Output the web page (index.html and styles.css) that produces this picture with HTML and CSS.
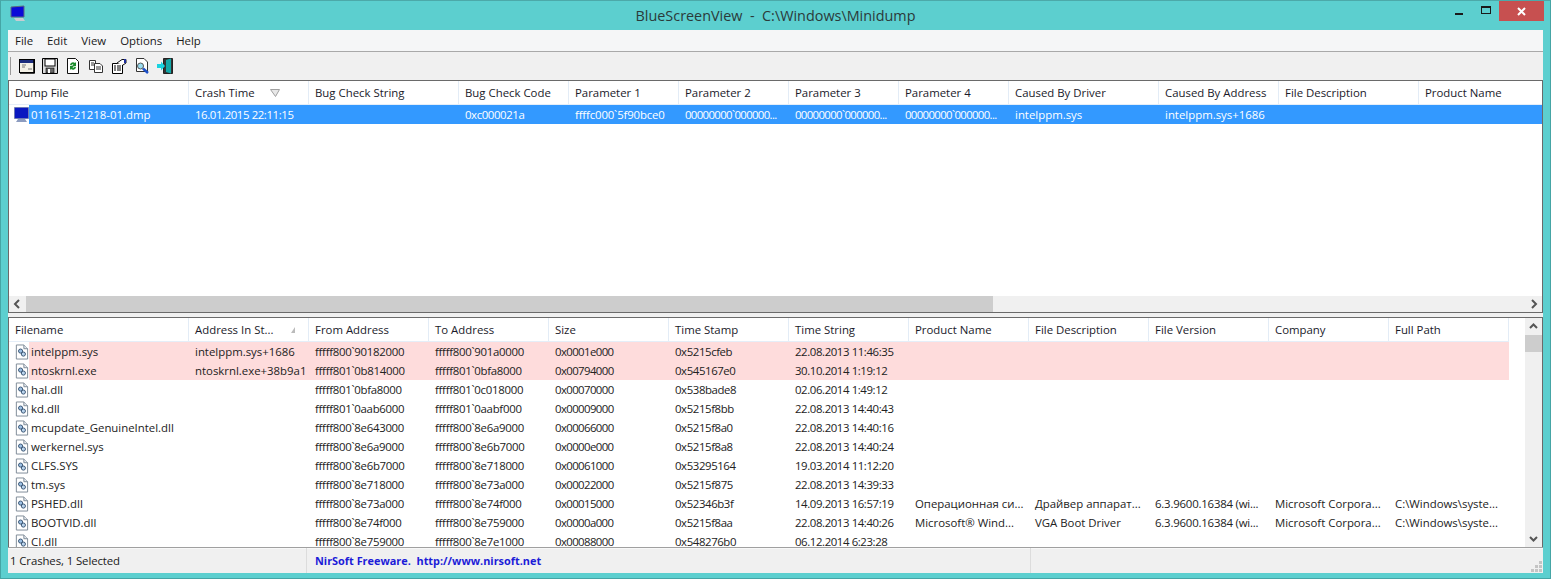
FILE: index.html
```html
<!DOCTYPE html>
<html lang="en">
<head>
<meta charset="utf-8">
<title>BlueScreenView</title>
<link rel="stylesheet" href="styles.css">
</head>
<body>
<svg class="defs" width="0" height="0">
  <symbol id="dll" viewBox="0 0 16 16">
    <path d="M2.5 .5H10.5L14.5 4.5V15.500H2.500Z" fill="#fff" stroke="#7b8794"/>
    <path d="M10.5 .5V4.5H14.5" fill="#e4e8ee" stroke="#7b8794"/>
    <circle cx="7" cy="7" r="2.2" fill="#9cc0e4" stroke="#34506f"/>
    <circle cx="10" cy="10.2" r="2.2" fill="#b9d3ec" stroke="#34506f"/>
  </symbol>
</svg>
<div class="window">
  <header class="titlebar">
    <svg class="appicon" width="16" height="18" viewBox="0 0 16 18"><path d="M1 2 14 1V12L1 12Z" fill="#0a0ad8" stroke="#5b6a80"/><path d="M4 13H13L15 16H6Z" fill="#c8cdd2"/></svg>
    <div class="title">BlueScreenView&nbsp; -&nbsp; C:\Windows\Minidump</div>
    <div class="controls">
      <div class="ctl"><span class="min"></span></div>
      <div class="ctl"><span class="max"></span></div>
      <div class="ctl close"><svg width="9" height="9" viewBox="0 0 9 9"><path d="M1 1 8 8M8 1 1 8" stroke="#fff" stroke-width="2"/></svg></div>
    </div>
  </header>
  <div class="client">
    <nav class="menu"><span>File</span><span>Edit</span><span>View</span><span>Options</span><span>Help</span></nav>
    <div class="toolbar">
      <i class="grip"></i>
      <svg class="tool" width="16" height="16" viewBox="0 0 16 16"><rect x=".5" y="1.500" width="15" height="13" fill="#f4f1e6" stroke="#000"/><rect x="1" y="2" width="14" height="3" fill="#1c2c7c"/><path d="M3 7H7M3 9H6M9 11H13" stroke="#777"/><path d="M15 2V15H1" fill="none" stroke="#000" stroke-width="1.500"/></svg>
      <svg class="tool" width="16" height="16" viewBox="0 0 16 16"><path d="M.5 .5H15.500V15.500H.5Z" fill="#dcdcdc" stroke="#000"/><rect x="3" y="1" width="10" height="7" fill="#fff" stroke="#000"/><rect x="4" y="10" width="8" height="5" fill="#666" stroke="#000" stroke-width=".6"/><rect x="6" y="11" width="2" height="4" fill="#fff"/></svg>
      <svg class="tool" width="16" height="16" viewBox="0 0 16 16"><path d="M2.500 .5H10.500L13.500 3.500V15.500H2.500Z" fill="#fff" stroke="#111"/><path d="M5 7A3 3 0 0 1 10 5L11 4V8H7L8.500 6.500A1.500 1.500 0 0 0 6.500 7.500Z" fill="#1c8c2c"/><path d="M11 9A3 3 0 0 1 6 11L5 12V8H9L7.500 9.500A1.500 1.500 0 0 0 9.500 8.500Z" fill="#1c8c2c"/></svg>
      <svg class="tool" width="16" height="16" viewBox="0 0 16 16"><path d="M1.500 2.500H7.500V11.500H1.500Z" fill="#fff" stroke="#333"/><path d="M6.500 5.500H12L14.500 8V14.500H6.500Z" fill="#fff" stroke="#333"/><path d="M3 5H6M3 7H6M8 9H13M8 11H13" stroke="#333"/></svg>
      <svg class="tool" width="16" height="16" viewBox="0 0 16 16"><path d="M1.500 5.500H11.500V15.500H1.500Z" fill="#fff" stroke="#000"/><path d="M3 8H5M6 8H10M3 10H5M6 10H10M3 12H5M6 12H10" stroke="#000"/><path d="M6 5 11 1.500H15V5L12 7" fill="#fff" stroke="#111"/><path d="M14 1V5" stroke="#1c2c9c" stroke-width="2"/></svg>
      <svg class="tool" width="16" height="16" viewBox="0 0 16 16"><path d="M2.500 .5H10L13.500 4V13.500H2.500Z" fill="#fff" stroke="#333"/><circle cx="6.500" cy="8" r="3" fill="#9adcf0" stroke="#555"/><path d="M9 10.500 14 15" stroke="#1c50c8" stroke-width="2.500"/></svg>
      <svg class="tool" width="16" height="16" viewBox="0 0 16 16"><path d="M6.500 .5H15.500V15.500H6.500Z" fill="#333" stroke="#222"/><path d="M9 2 14 .5V15.500L9 14Z" fill="#12a8a8"/><path d="M0 6H4V3.500L8 8 4 12.500V10H0Z" fill="#19d3e0"/></svg>
    </div>

    <section class="pane top">
      <div class="row head cols-top">
        <div>Dump File</div>
        <div class="sortable">Crash Time<svg class="sort" width="10" height="8" viewBox="0 0 10 8"><path d="M.5 .5H9.500L5.500 7.500Z" fill="#e8e8e8" stroke="#a0a0a0"/></svg></div>
        <div>Bug Check String</div><div>Bug Check Code</div><div>Parameter 1</div><div>Parameter 2</div><div>Parameter 3</div><div>Parameter 4</div><div>Caused By Driver</div><div>Caused By Address</div><div>File Description</div><div>Product Name</div>
      </div>
      <div class="row data cols-top selected">
        <div class="first"><svg class="dump" width="15" height="15" viewBox="0 0 15 15"><rect x=".5" y=".5" width="14" height="11" fill="#0a18c0" stroke="#58688c" stroke-dasharray="1 1"/><path d="M4 12H11L13 15H2Z" fill="#8c9cc0"/></svg><span>011615-21218-01.dmp</span></div>
        <div class="num">16.01.2015 22:11:15</div><div></div><div class="num">0xc000021a</div><div class="num">ffffc000`5f90bce0</div><div class="num wide">00000000`000000...</div><div class="num wide">00000000`000000...</div><div class="num wide">00000000`000000...</div><div>intelppm.sys</div><div>intelppm.sys+1686</div><div></div><div></div>
      </div>
      <div class="fill"></div>
      <div class="hscroll">
        <svg class="chev" width="17" height="16" viewBox="0 0 17 16"><path d="M10 4 6 8 10 12" fill="none" stroke="#555" stroke-width="2"/></svg>
        <div class="track"><div class="thumb"></div></div>
        <svg class="chev" width="17" height="16" viewBox="0 0 17 16"><path d="M7 4 11 8 7 12" fill="none" stroke="#555" stroke-width="2"/></svg>
      </div>
    </section>

    <section class="pane bottom">
      <div class="listarea">
        <div class="row head cols-bottom">
          <div>Filename</div>
          <div class="sortable">Address In St...<svg class="sort small" width="8" height="8" viewBox="0 0 8 8"><path d="M2 7 6 1V7Z" fill="#bbb"/></svg></div>
          <div>From Address</div><div>To Address</div><div>Size</div><div>Time Stamp</div><div>Time String</div><div>Product Name</div><div>File Description</div><div>File Version</div><div>Company</div><div>Full Path</div>
        </div>
        <div class="rows">
          <div class="row data cols-bottom hot"><div class="first"><svg class="dll"><use href="#dll"/></svg><span>intelppm.sys</span></div><div>intelppm.sys+1686</div><div class="num">fffff800`90182000</div><div class="num">fffff800`901a0000</div><div class="num">0x0001e000</div><div class="num">0x5215cfeb</div><div class="num">22.08.2013 11:46:35</div><div></div><div></div><div></div><div></div><div></div></div>
          <div class="row data cols-bottom hot"><div class="first"><svg class="dll"><use href="#dll"/></svg><span>ntoskrnl.exe</span></div><div>ntoskrnl.exe+38b9a1</div><div class="num">fffff801`0b814000</div><div class="num">fffff801`0bfa8000</div><div class="num">0x00794000</div><div class="num">0x545167e0</div><div class="num">30.10.2014 1:19:12</div><div></div><div></div><div></div><div></div><div></div></div>
          <div class="row data cols-bottom"><div class="first"><svg class="dll"><use href="#dll"/></svg><span>hal.dll</span></div><div></div><div class="num">fffff801`0bfa8000</div><div class="num">fffff801`0c018000</div><div class="num">0x00070000</div><div class="num">0x538bade8</div><div class="num">02.06.2014 1:49:12</div></div>
          <div class="row data cols-bottom"><div class="first"><svg class="dll"><use href="#dll"/></svg><span>kd.dll</span></div><div></div><div class="num">fffff801`0aab6000</div><div class="num">fffff801`0aabf000</div><div class="num">0x00009000</div><div class="num">0x5215f8bb</div><div class="num">22.08.2013 14:40:43</div></div>
          <div class="row data cols-bottom"><div class="first"><svg class="dll"><use href="#dll"/></svg><span>mcupdate_GenuineIntel.dll</span></div><div></div><div class="num">fffff800`8e643000</div><div class="num">fffff800`8e6a9000</div><div class="num">0x00066000</div><div class="num">0x5215f8a0</div><div class="num">22.08.2013 14:40:16</div></div>
          <div class="row data cols-bottom"><div class="first"><svg class="dll"><use href="#dll"/></svg><span>werkernel.sys</span></div><div></div><div class="num">fffff800`8e6a9000</div><div class="num">fffff800`8e6b7000</div><div class="num">0x0000e000</div><div class="num">0x5215f8a8</div><div class="num">22.08.2013 14:40:24</div></div>
          <div class="row data cols-bottom"><div class="first"><svg class="dll"><use href="#dll"/></svg><span>CLFS.SYS</span></div><div></div><div class="num">fffff800`8e6b7000</div><div class="num">fffff800`8e718000</div><div class="num">0x00061000</div><div class="num">0x53295164</div><div class="num">19.03.2014 11:12:20</div></div>
          <div class="row data cols-bottom"><div class="first"><svg class="dll"><use href="#dll"/></svg><span>tm.sys</span></div><div></div><div class="num">fffff800`8e718000</div><div class="num">fffff800`8e73a000</div><div class="num">0x00022000</div><div class="num">0x5215f875</div><div class="num">22.08.2013 14:39:33</div></div>
          <div class="row data cols-bottom"><div class="first"><svg class="dll"><use href="#dll"/></svg><span>PSHED.dll</span></div><div></div><div class="num">fffff800`8e73a000</div><div class="num">fffff800`8e74f000</div><div class="num">0x00015000</div><div class="num">0x52346b3f</div><div class="num">14.09.2013 16:57:19</div><div>Операционная си...</div><div>Драйвер аппарат...</div><div class="num">6.3.9600.16384 (wi...</div><div>Microsoft Corpora...</div><div>C:\Windows\syste...</div></div>
          <div class="row data cols-bottom"><div class="first"><svg class="dll"><use href="#dll"/></svg><span>BOOTVID.dll</span></div><div></div><div class="num">fffff800`8e74f000</div><div class="num">fffff800`8e759000</div><div class="num">0x0000a000</div><div class="num">0x5215f8aa</div><div class="num">22.08.2013 14:40:26</div><div>Microsoft® Wind...</div><div>VGA Boot Driver</div><div class="num">6.3.9600.16384 (wi...</div><div>Microsoft Corpora...</div><div>C:\Windows\syste...</div></div>
          <div class="row data cols-bottom"><div class="first"><svg class="dll"><use href="#dll"/></svg><span>CI.dll</span></div><div></div><div class="num">fffff800`8e759000</div><div class="num">fffff800`8e7e1000</div><div class="num">0x00088000</div><div class="num">0x548276b0</div><div class="num">06.12.2014 6:23:28</div></div>
        </div>
      </div>
      <div class="vscroll">
        <svg class="chev" width="17" height="17" viewBox="0 0 17 17"><path d="M5 10 8.500 6.500 12 10" fill="none" stroke="#555" stroke-width="2"/></svg>
        <div class="vtrack"><div class="vthumb"></div></div>
        <svg class="chev" width="17" height="17" viewBox="0 0 17 17"><path d="M5 7 8.500 10.500 12 7" fill="none" stroke="#555" stroke-width="2"/></svg>
      </div>
    </section>

    <footer class="status">
      <div class="s1">1 Crashes, 1 Selected</div>
      <div class="s2">NirSoft Freeware.&nbsp; http://www.nirsoft.net</div>
      <div class="s3"><svg class="sizegrip" width="12" height="12" viewBox="0 0 12 12"><path d="M8 0h3v3H8zM4 4h3v3H4zM8 4h3v3H8zM0 8h3v3H0zM4 8h3v3H4zM8 8h3v3H8z" fill="#c4c4c4"/></svg></div>
    </footer>
  </div>
</div>
</body>
</html>
```

FILE: styles.css
```css
* { box-sizing: border-box; }
html, body { margin: 0; height: 100%; overflow: hidden; }
body { font-family: "Open Sans", "Noto Sans", sans-serif; font-size: 11.4px; color: #1a1a1a; }
.defs { display: block; height: 0; }
.window {
  width: 1551px; height: 579px; background: #5ccfcf;
  border: 1px solid #45a5a5; border-top-color: #4ca9a9;
  padding: 0 7px 7px; display: flex; flex-direction: column;
}
.titlebar { height: 29px; flex: none; display: flex; align-items: flex-start; position: relative; }
.appicon { margin: 4px 0 0 2px; }
.title {
  position: absolute; left: 0; right: 0; top: 5px; text-align: center;
  font-size: 14.4px; line-height: 20px; color: #2b3a3a;
}
.controls { margin-left: auto; display: flex; height: 20px; }
.ctl { width: 27px; display: flex; align-items: center; justify-content: center; }
.ctl.close { width: 45px; background: #c75050; margin-right: -1px; }
.min { width: 8px; height: 2px; background: #1a1a1a; margin-top: 5px; }
.max { width: 10px; height: 8px; border: 1px solid #1a1a1a; border-top-width: 2px; margin-top: -2px; }
.client { flex: 1; min-height: 0; background: #f0f0f0; display: flex; flex-direction: column; }
.menu {
  height: 22px; flex: none; background: #f5f6f7; border-bottom: 1px solid #a9a9a9;
  display: flex; align-items: center; gap: 14px; padding: 0 7px; font-size: 11.4px;
}
.toolbar { height: 28px; flex: none; display: flex; align-items: center; gap: 7px; padding: 0 2px; background: #f0f0f0; }
.grip { width: 1px; height: 18px; background: #9a9a9a; margin-right: 1px; }
.tool { flex: none; }
.pane { background: #fff; border: 1px solid #6a6a6a; display: flex; flex-direction: column; overflow: hidden; }
.pane.top { height: 233px; flex: none; }
.pane.bottom { height: 230px; flex: none; margin-top: 4px; border-bottom: 0; flex-direction: row; }
.listarea { flex: 1; min-width: 0; display: flex; flex-direction: column; overflow: hidden; }
.rows { flex: 1; overflow: hidden; }
.row { display: grid; flex: none; width: max-content; }
.cols-top { grid-template-columns: 180px 120px 150px 110px 110px 110px 110px 110px 150px 120px 140px 125px; }
.cols-bottom { grid-template-columns: 180px 120px 120px 120px 120px 120px 120px 120px 120px 120px 120px 120px; }
.head { background: #fff; border-bottom: 1px solid #e5eef8; }
.pane.top .head { height: 24px; }
.pane.bottom .head { height: 24px; }
.head > div {
  padding: 0 6px; line-height: 23px; border-right: 1px solid #e3ecf6; white-space: nowrap;
  position: relative; color: #1a1a2a;
}
.data { height: 19px; line-height: 19px; color: #222; }
.data > div { padding: 0 6px; white-space: nowrap; overflow: hidden; }
.data > .num { letter-spacing: -.4px; }
.data > .wide { letter-spacing: -.65px; }
.cols-top > .num:nth-child(5) { letter-spacing: -.15px; }
.cols-bottom > .num:nth-child(3), .cols-bottom > .num:nth-child(4) { letter-spacing: -.28px; }
.cols-bottom > .num:nth-child(5) { letter-spacing: -.6px; }
.cols-bottom > .num:nth-child(10) { letter-spacing: -.2px; }
.data > .first { padding: 0 0 0 5px; display: flex; align-items: center; overflow: visible; }
.first span { padding-left: 2px; flex: 1; line-height: 19px; height: 19px; }
.dump { flex: none; }
.dll { width: 15px; height: 16px; flex: none; }
.selected { background: linear-gradient(#3399ff, #3399ff) 20px 0 no-repeat; color: #fff; }
.hot { background: linear-gradient(#fedcdc, #fedcdc) 20px 0 no-repeat; }
.sort { position: absolute; }
.head .sort { left: 81px; top: 8px; }
.head .sort.small { left: 100px; top: 8px; }
.fill { flex: 1; }
.hscroll { height: 16px; flex: none; background: #f0f0f0; display: flex; align-items: center; }
.chev { flex: none; display: block; }
.track { flex: 1; height: 16px; }
.thumb { width: 967px; height: 16px; background: #cdcdcd; }
.vscroll { width: 17px; flex: none; background: #f0f0f0; display: flex; flex-direction: column; margin-left: 16px; }
.vtrack { flex: 1; }
.vthumb { height: 17px; background: #cdcdcd; }
.status {
  height: 26px; flex: none; background: #f0f0f0; display: flex; align-items: center;
  border-top: 1px solid #a0a0a0; box-shadow: inset 0 1px 0 #f8f8f8; font-size: 11.4px;
}
.status > div { height: 100%; display: flex; align-items: center; }
.s1 { width: 299px; padding-left: 2px; border-right: 1px solid #dcdcdc; letter-spacing: -.1px; }
.s2 { width: 724px; padding-left: 8px; border-right: 1px solid #dcdcdc; color: #1c1cd8; font-weight: 700; font-size: 10.9px; }
.s3 { flex: 1; justify-content: flex-end; align-items: flex-end !important; }
.sizegrip { display: block; }
```
